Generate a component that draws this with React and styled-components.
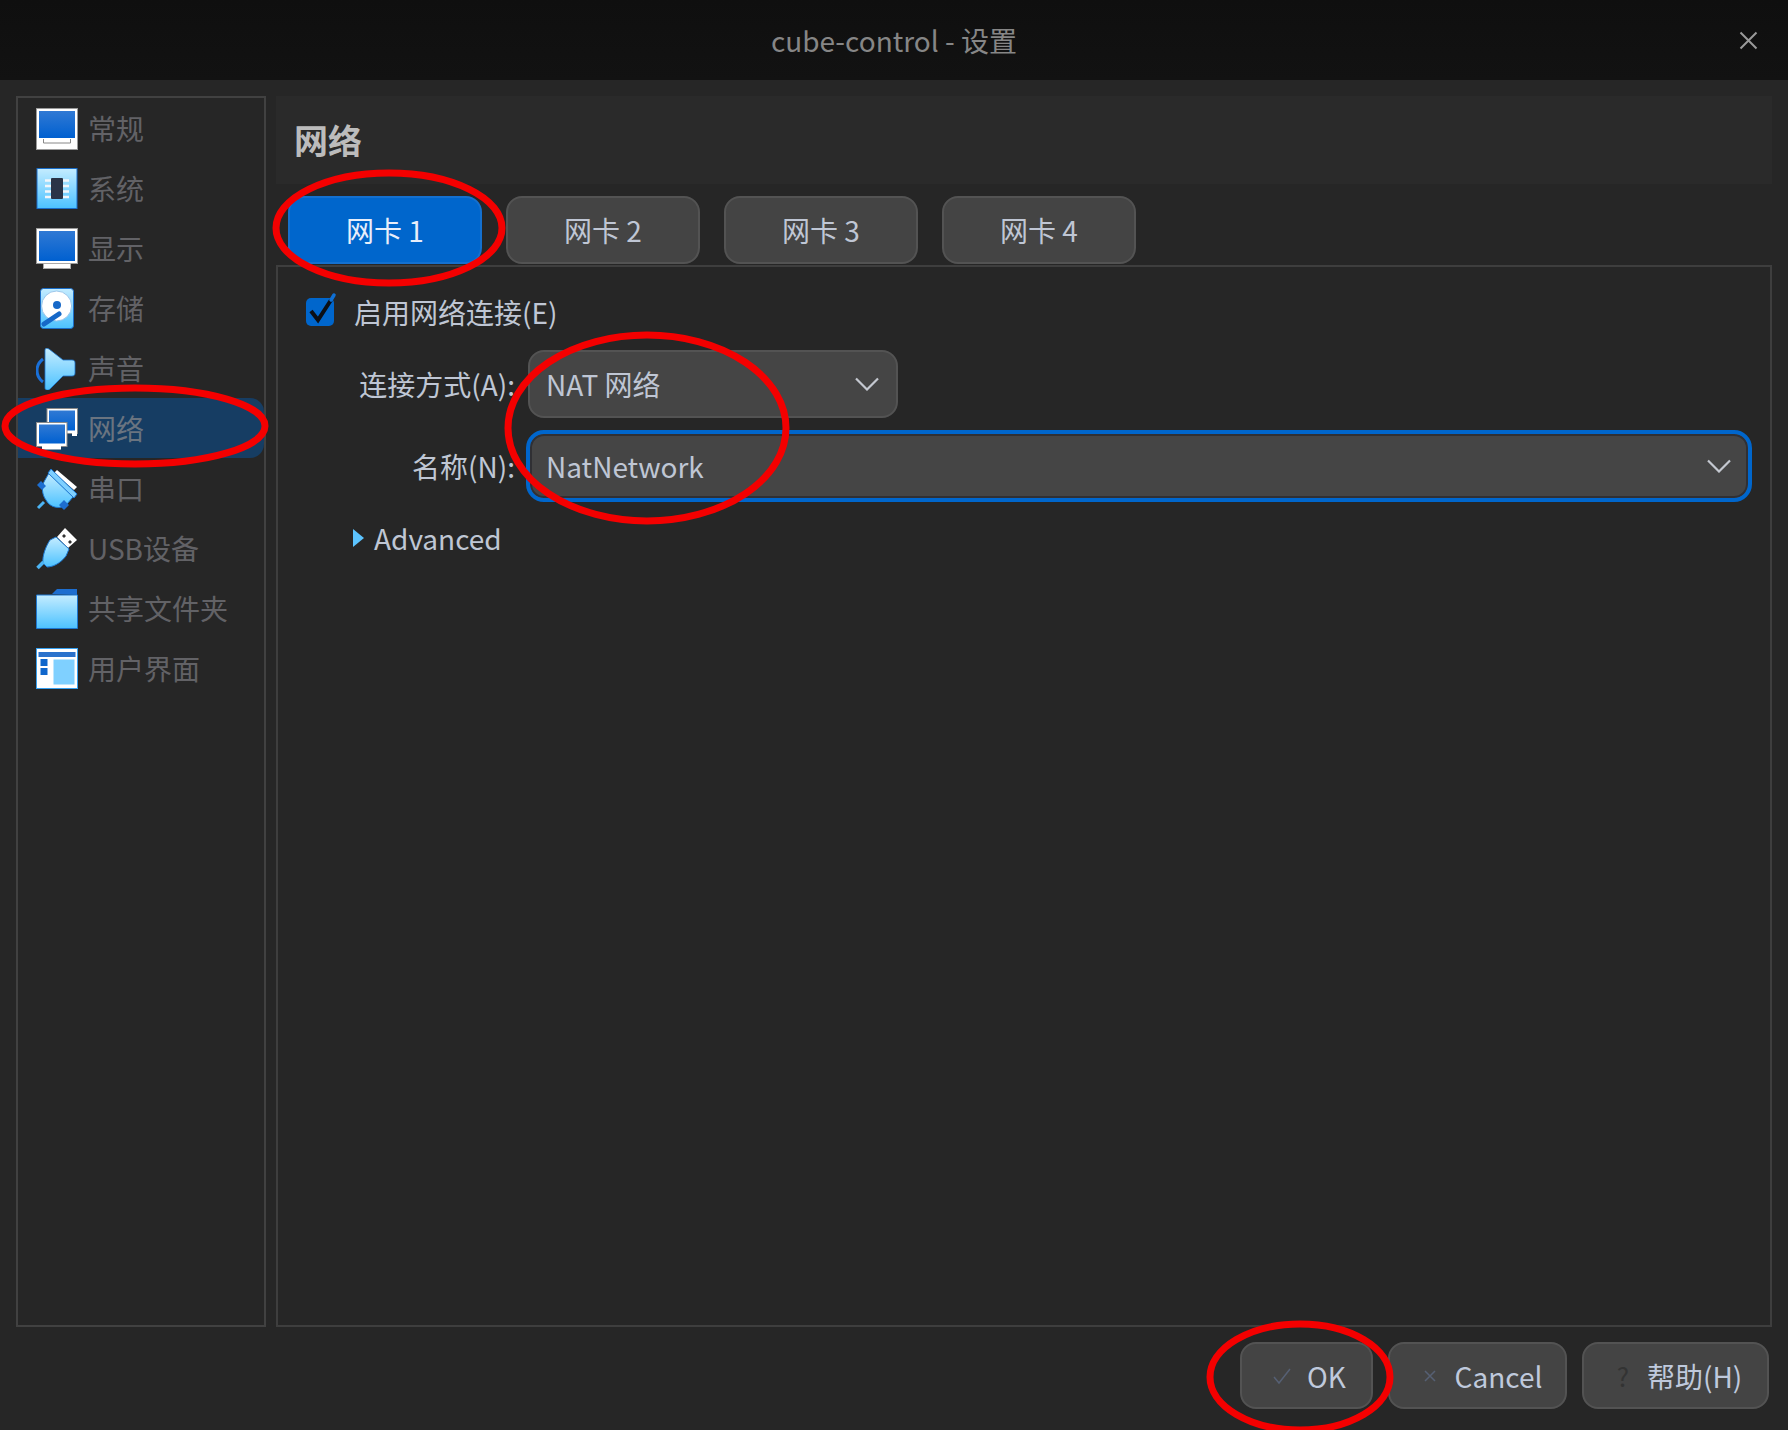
import React from "react";
import styled, { createGlobalStyle } from "styled-components";

const Global = createGlobalStyle`
  html, body { margin: 0; padding: 0; background: #262626; }
  body { font-family: "Noto Sans CJK SC", "Noto Sans", sans-serif; }
`;

const Win = styled.div`
  position: relative;
  width: 1788px;
  height: 1430px;
  overflow: hidden;
  display: flex;
  flex-direction: column;
  background: #262626;
  color: #bfc6d4;
  font-size: 28px;
  line-height: 40px;
`;
const TitleBar = styled.header`
  position: relative;
  height: 80px;
  flex: none;
  display: flex;
  align-items: center;
  justify-content: center;
  background: linear-gradient(#0f0f0f, #121212);
  color: #868686;
  font-size: 28px;
`;
const CloseBtn = styled.svg`
  position: absolute;
  right: 30px;
  top: 31px;
  width: 19px;
  height: 19px;
`;
const Body = styled.div`
  flex: 1;
  min-height: 0;
  display: flex;
  gap: 10px;
  padding: 16px 16px 0;
`;
const Side = styled.nav`
  width: 250px;
  flex: none;
  box-sizing: border-box;
  border: 2px solid #414141;
  display: flex;
  flex-direction: column;
`;
const SideItem = styled.div`
  height: 60px;
  flex: none;
  display: flex;
  align-items: center;
  gap: 10px;
  padding-left: 18px;
  color: #626266;
  border-radius: 0 14px 14px 0;
  background: ${(p) => (p.$active ? "#163d63" : "transparent")};
  ${(p) => p.$active && "color: #6a7480;"}
`;
const IconBox = styled.svg`
  width: 42px;
  height: 42px;
  flex: none;
  margin-top: 1px;
`;
const Main = styled.main`
  flex: 1;
  min-width: 0;
  display: flex;
  flex-direction: column;
`;
const Header = styled.div`
  height: 88px;
  flex: none;
  display: flex;
  align-items: center;
  padding-left: 18px;
  background: #2a2a2a;
  color: #bcbcbc;
  font-size: 34px;
  font-weight: 700;
`;
const Tabs = styled.div`
  display: flex;
  gap: 24px;
  padding: 12px 0 1px 12px;
`;
const Tab = styled.div`
  width: 194px;
  height: 68px;
  box-sizing: border-box;
  display: flex;
  align-items: center;
  justify-content: center;
  border-radius: 16px;
  border: 2px solid ${(p) => (p.$active ? "#1470cf" : "#535353")};
  background: ${(p) => (p.$active ? "#0066cc" : "#444444")};
  color: ${(p) => (p.$active ? "#e8eefa" : "#bfc6d4")};
`;
const Panel = styled.section`
  flex: 1;
  min-height: 0;
  box-sizing: border-box;
  border: 2px solid #3e3e3e;
  padding: 31px 18px 0 0;
  display: flex;
  flex-direction: column;
`;
const CheckRow = styled.div`
  height: 28px;
  display: flex;
  align-items: center;
  gap: 17px;
  padding-left: 27px;
  margin-bottom: 24px;
`;
const CheckIcon = styled.svg`
  width: 32px;
  height: 33px;
  margin-top: -3px;
  flex: none;
  overflow: visible;
`;
const FormRow = styled.div`
  display: flex;
  align-items: center;
  gap: 13px;
  margin-bottom: ${(p) => p.$mb}px;
`;
const Label = styled.label`
  width: 237px;
  flex: none;
  text-align: right;
`;
const Combo = styled.div`
  box-sizing: border-box;
  display: flex;
  align-items: center;
  justify-content: space-between;
  background: #454545;
  ${(p) =>
    p.$focus
      ? `flex: 1; height: 72px; margin-left: -2px; border: 4px solid #0066cc; box-shadow: inset 0 0 0 2px #303034; border-radius: 18px; padding: 0 17px 0 16px;`
      : `width: 370px; height: 68px; border: 2px solid #535353; border-radius: 16px; padding: 0 17px 0 16px;`}
`;
const Chevron = styled.svg`
  width: 24px;
  height: 14px;
  flex: none;
`;
const Advanced = styled.div`
  display: flex;
  align-items: center;
  gap: 10px;
  padding-left: 75px;
  margin-top: -1px;
`;
const Arrow = styled.svg`
  width: 11px;
  height: 18px;
  flex: none;
`;
const Footer = styled.footer`
  height: 103px;
  flex: none;
  box-sizing: border-box;
  padding: 15px 19px 0 0;
  display: flex;
  justify-content: flex-end;
  gap: 15px;
`;
const Btn = styled.button`
  width: ${(p) => p.$w}px;
  height: 67px;
  box-sizing: border-box;
  display: flex;
  align-items: center;
  justify-content: center;
  gap: ${(p) => p.$gap}px;
  border: 2px solid #535353;
  border-radius: 16px;
  background: #444444;
  color: #bfc9dc;
  font: inherit;
  padding: 0 0 0 ${(p) => p.$pl}px;
`;
const BtnIcon = styled.svg`
  width: 18px;
  height: 18px;
  flex: none;
`;
const HelpMark = styled.span`
  color: #333333;
  font-size: 26px;
`;
const Marks = styled.svg`
  position: absolute;
  left: 0;
  top: 0;
  width: 1788px;
  height: 1430px;
  pointer-events: none;
`;

const Defs = () => (
  <svg width="0" height="0" style={{ position: "absolute" }}>
    <defs>
      <linearGradient id="scr" x1="0" y1="0" x2="0" y2="1">
        <stop offset="0" stopColor="#3079d4" />
        <stop offset="1" stopColor="#0060d0" />
      </linearGradient>
      <linearGradient id="sky" x1="0" y1="0" x2="0" y2="1">
        <stop offset="0" stopColor="#c4ecff" />
        <stop offset="1" stopColor="#4cc2ff" />
      </linearGradient>
    </defs>
  </svg>
);

const GeneralIcon = () => (
  <IconBox viewBox="0 0 42 42">
    <rect x="0.5" y="0.5" width="41" height="41" fill="#fff" stroke="#9a9a9a" />
    <rect x="3" y="3" width="36" height="27" fill="url(#scr)" />
    <path d="M7.5 31v4h27v-4" fill="none" stroke="#888" />
  </IconBox>
);
const SystemIcon = () => (
  <IconBox viewBox="0 0 42 42">
    <rect x="1" y="0.5" width="40" height="40" fill="url(#sky)" stroke="#1a6dc8" />
    <path d="M9 12.500h24M9 18h24M9 23.500h24M9 29h24" stroke="#f2f6fa" strokeWidth="2.600" />
    <rect x="15" y="10" width="12" height="21" rx="1" fill="#2a3346" />
  </IconBox>
);
const DisplayIcon = () => (
  <IconBox viewBox="0 0 42 42">
    <rect x="0.5" y="0.5" width="41" height="35" fill="#fff" stroke="#9a9a9a" />
    <rect x="3" y="3" width="36" height="30" fill="url(#scr)" />
    <rect x="7.5" y="35.500" width="27" height="5" fill="#fff" stroke="#aaa" />
  </IconBox>
);
const StorageIcon = () => (
  <IconBox viewBox="0 0 42 42">
    <rect x="4.500" y="0.500" width="33" height="40" rx="3" fill="url(#sky)" stroke="#1a6dc8" />
    <circle cx="20.600" cy="18" r="15" fill="#fff" stroke="#9cc6ea" />
    <circle cx="21" cy="17" r="4" fill="#1668c8" />
    <path d="M8 36L23 26" stroke="#1668c8" strokeWidth="5" strokeLinecap="round" />
  </IconBox>
);
const AudioIcon = () => (
  <IconBox viewBox="0 0 42 42">
    <path d="M7 11C-1 17-1 28 7 34" fill="none" stroke="#1a70d8" strokeWidth="3" />
    <path d="M9 2c0-2 2-2 4-1l14 11h9c2 0 3 1 3 3v10c0 2-1 3-3 3h-9L14 41c-2 2-5 1-5-1z" fill="url(#sky)" stroke="#1d77d0" strokeWidth="0.800" />
  </IconBox>
);
const NetworkIcon = () => (
  <IconBox viewBox="0 0 42 42">
    <rect x="11" y="0.500" width="30.500" height="25" fill="#fff" stroke="#8a8a8a" />
    <rect x="13" y="2.500" width="26" height="20" fill="url(#scr)" />
    <rect x="36" y="25" width="5" height="3" fill="#fff" />
    <rect x="0.500" y="14.500" width="30.500" height="24" fill="#fff" stroke="#8a8a8a" />
    <rect x="3" y="16.500" width="26" height="19" fill="url(#scr)" />
    <rect x="6" y="38" width="19" height="3.500" fill="#fff" />
  </IconBox>
);
const SerialIcon = () => (
  <IconBox viewBox="0 0 42 42">
    <path d="M21 2l20 17-3 3L18 5z" fill="#fff" />
    <path d="M13 5L37 29 31 36C25 42 14 40 10 32 6 27 5 18 9 12z" fill="url(#sky)" stroke="#1d77d0" />
    <path d="M15 1l26 25-3 4L12 5z" fill="#7fd0ff" stroke="#1d77d0" />
    <path d="M1 17l4-4 5 5-4 4zM23 37l5-5 5 5-5 5z" fill="#1d6ed0" />
    <path d="M2 40l6-6" stroke="#4cb4f4" strokeWidth="3" />
  </IconBox>
);
const UsbIcon = () => (
  <IconBox viewBox="0 0 42 42">
    <path d="M29 0l12 12-9 8-11-11z" fill="#fff" />
    <path d="M26 8l2-2 2 2-2 2zM32 14l2-2 2 2-2 2z" fill="#333" />
    <path d="M20 9L33 21 30 28C24 36 16 39 11 39L7 35C6 28 10 18 14 12z" fill="url(#sky)" stroke="#1d77d0" />
    <path d="M1.500 40l6-6" stroke="#4cb4f4" strokeWidth="3.500" />
  </IconBox>
);
const FolderIcon = () => (
  <IconBox viewBox="0 0 42 42">
    <path d="M16 6l5-5h20v6z" fill="#1d6ed0" />
    <path d="M0.500 7h41v33.500H.5z" fill="url(#sky)" stroke="#1d77d0" />
  </IconBox>
);
const UiIcon = () => (
  <IconBox viewBox="0 0 42 42">
    <rect x="0.500" y="0.500" width="41" height="40" fill="#fff" stroke="#36a0f0" />
    <rect x="2.500" y="4" width="37" height="5" fill="#2a72cc" />
    <rect x="4.500" y="11" width="7" height="7" fill="#0f66cc" />
    <rect x="4.500" y="20" width="7" height="7" fill="#0f66cc" />
    <rect x="17.500" y="11.500" width="21" height="25" fill="#7fd0ff" />
  </IconBox>
);

const items = [
  ["常规", GeneralIcon],
  ["系统", SystemIcon],
  ["显示", DisplayIcon],
  ["存储", StorageIcon],
  ["声音", AudioIcon],
  ["网络", NetworkIcon],
  ["串口", SerialIcon],
  ["USB设备", UsbIcon],
  ["共享文件夹", FolderIcon],
  ["用户界面", UiIcon],
];

const ChevronDown = () => (
  <Chevron viewBox="0 0 24 14">
    <path d="M1 1.500l11 11 11-11" fill="none" stroke="#c4c8d0" strokeWidth="2.200" />
  </Chevron>
);

export default function App() {
  return (
    <Win>
      <Global />
      <Defs />
      <TitleBar>
        cube-control - 设置
        <CloseBtn viewBox="0 0 19 19">
          <path d="M1.500 1.500l16 16M17.500 1.500l-16 16" stroke="#9a9a9a" strokeWidth="2" />
        </CloseBtn>
      </TitleBar>
      <Body>
        <Side>
          {items.map(([name, Ico]) => (
            <SideItem key={name} $active={name === "网络"}>
              <Ico />
              <span>{name}</span>
            </SideItem>
          ))}
        </Side>
        <Main>
          <Header>网络</Header>
          <Tabs>
            {[1, 2, 3, 4].map((n) => (
              <Tab key={n} $active={n === 1}>{`网卡 ${n}`}</Tab>
            ))}
          </Tabs>
          <Panel>
            <CheckRow>
              <CheckIcon viewBox="0 0 32 33">
                <rect x="1" y="4" width="28" height="28" rx="5" fill="#0066cc" />
                <path d="M6 17l7 9L26 6" fill="none" stroke="#0b0f16" strokeWidth="4" />
                <path d="M26 6l3-5" stroke="#0f6fd4" strokeWidth="3.500" strokeLinecap="round" />
              </CheckIcon>
              <span>启用网络连接(E)</span>
            </CheckRow>
            <FormRow $mb={12}>
              <Label>连接方式(A):</Label>
              <Combo>
                <span>NAT 网络</span>
                <ChevronDown />
              </Combo>
            </FormRow>
            <FormRow $mb={17}>
              <Label>名称(N):</Label>
              <Combo $focus>
                <span>NatNetwork</span>
                <ChevronDown />
              </Combo>
            </FormRow>
            <Advanced>
              <Arrow viewBox="0 0 11 18">
                <path d="M0 0l11 9-11 9z" fill="#5cc4ff" />
              </Arrow>
              <span>Advanced</span>
            </Advanced>
          </Panel>
        </Main>
      </Body>
      <Footer>
        <Btn $w={133} $gap={16} $pl={6}>
          <BtnIcon viewBox="0 0 18 18">
            <path d="M1 10l5 6L17 2" fill="none" stroke="#566074" strokeWidth="1.500" />
          </BtnIcon>
          OK
        </Btn>
        <Btn $w={179} $gap={16} $pl={8}>
          <BtnIcon viewBox="0 0 18 18">
            <path d="M4 4l10 10M14 4L4 14" stroke="#566074" strokeWidth="1.500" />
          </BtnIcon>
          Cancel
        </Btn>
        <Btn $w={187} $gap={18} $pl={8}>
          <HelpMark>?</HelpMark>
          帮助(H)
        </Btn>
      </Footer>
      <Marks viewBox="0 0 1788 1430">
        <g fill="none" stroke="#f40000" strokeWidth="7">
          <ellipse cx="389" cy="228" rx="113" ry="55" />
          <ellipse cx="135" cy="426" rx="130" ry="38" />
          <ellipse cx="647" cy="428" rx="139" ry="93" />
          <ellipse cx="1300" cy="1377" rx="90" ry="53" />
        </g>
      </Marks>
    </Win>
  );
}
